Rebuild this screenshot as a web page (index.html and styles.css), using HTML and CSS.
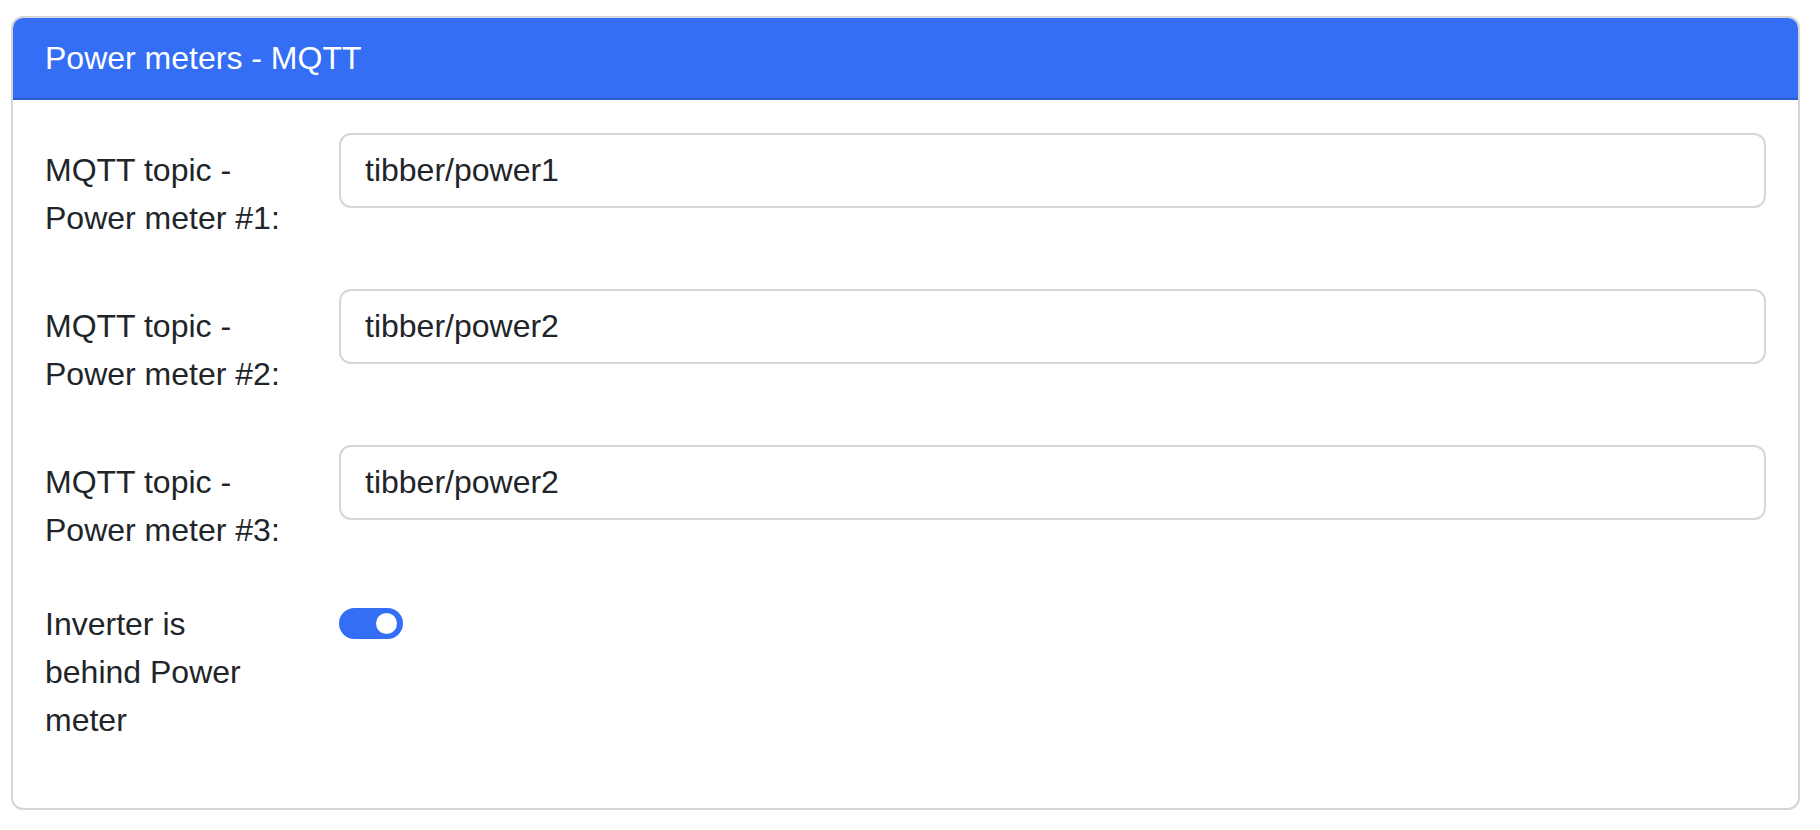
FILE: index.html
```html
<!DOCTYPE html>
<html lang="en">
<head>
<meta charset="utf-8">
<title>Power meters - MQTT</title>
<link rel="stylesheet" href="styles.css">
</head>
<body>
  <div class="card">
    <div class="card-header">Power meters - MQTT</div>
    <div class="card-body">
      <div class="row">
        <label class="label">MQTT topic - Power meter #1:</label>
        <div class="field"><input class="input" type="text" value="tibber/power1"></div>
      </div>
      <div class="row">
        <label class="label">MQTT topic - Power meter #2:</label>
        <div class="field"><input class="input" type="text" value="tibber/power2"></div>
      </div>
      <div class="row">
        <label class="label">MQTT topic - Power meter #3:</label>
        <div class="field"><input class="input" type="text" value="tibber/power2"></div>
      </div>
      <div class="row">
        <label class="label label-check">Inverter is behind Power meter</label>
        <div class="field"><span class="switch"></span></div>
      </div>
    </div>
  </div>
</body>
</html>
```

FILE: styles.css
```css
html, body {
  margin: 0;
  padding: 0;
  background: #ffffff;
}
body {
  padding: 16px 20px 0 11px;
  font-family: "Liberation Sans", Arial, sans-serif;
  font-size: 32px;
  line-height: 1.5;
  color: #212529;
}
.card {
  border: 2px solid #d4d4d4;
  border-radius: 12px;
  overflow: hidden;
  background: #fff;
}
.card-header {
  background: #336ef5;
  color: #ffffff;
  padding: 16px 32px;
  border-bottom: 2px solid #2a5dcf;
}
.card-body {
  padding: 32px 32px 32px 32px;
}
.row {
  display: grid;
  grid-template-columns: 240px 1fr;
  column-gap: 54px;
  margin-bottom: 32px;
}
.label {
  padding: 14px 0;
}
.label-check {
  padding: 0;
}
.field {
  min-width: 0;
}
.input {
  box-sizing: border-box;
  display: block;
  width: 100%;
  height: 75px;
  margin-top: 1px;
  padding: 0 24px;
  border: 2px solid #d3d7dc;
  border-radius: 12px;
  font-family: inherit;
  font-size: 32px;
  color: #212529;
  background: #fff;
  outline: none;
}
.switch {
  display: block;
  position: relative;
  width: 64px;
  height: 31px;
  margin-top: 8px;
  border-radius: 16px;
  background: #336ef5;
}
.switch::after {
  content: "";
  position: absolute;
  top: 5px;
  right: 6px;
  width: 21px;
  height: 21px;
  border-radius: 50%;
  background: #ffffff;
}
```
